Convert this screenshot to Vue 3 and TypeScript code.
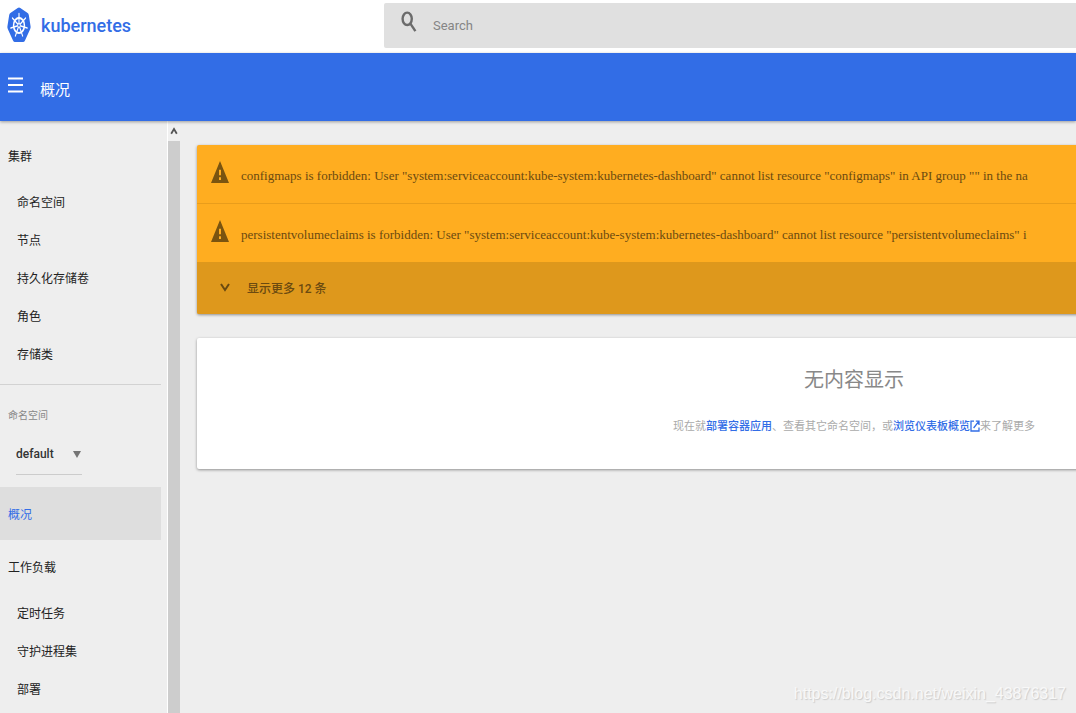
<script setup lang="ts">
import { ref } from 'vue'

interface NavGroup {
  title: string
  items: string[]
}

const cluster: NavGroup = {
  title: '集群',
  items: ['命名空间', '节点', '持久化存储卷', '角色', '存储类'],
}
const workloads: NavGroup = {
  title: '工作负载',
  items: ['定时任务', '守护进程集', '部署'],
}

const account = 'system:serviceaccount:kube-system:kubernetes-dashboard'
const warnings: string[] = [
  `configmaps is forbidden: User "${account}" cannot list resource "configmaps" in API group "" in the na`,
  `persistentvolumeclaims is forbidden: User "${account}" cannot list resource "persistentvolumeclaims" i`,
]

const query = ref('')
const namespace = ref('default')
const spokes = [0, 1, 2, 3, 4, 5, 6].map((i) => (i * 360) / 7)
</script>

<template>
  <div class="page">
    <header class="top">
      <a class="brand" href="#">
        <svg class="logo" viewBox="0 0 24 36" preserveAspectRatio="none" aria-hidden="true">
          <path
            d="M12 .6 Q12.7 .6 13.3 1 L20.6 6.1 Q21.5 6.8 21.8 8 L23.6 19.6 Q23.8 21 23.1 22.2 L18 33.4 Q17.3 35 16 35 H8 Q6.7 35 6 33.4 L.9 22.2 Q.2 21 .4 19.6 L2.2 8 Q2.5 6.8 3.4 6.1 L10.7 1 Q11.3 .6 12 .6Z"
            fill="#326de6"
          />
          <g transform="translate(12 18.4) scale(1 1.4)" stroke="#fff" fill="none">
            <circle r="5.4" stroke-width="1.5" />
            <path
              v-for="angle in spokes"
              :key="angle"
              d="M0 -1.2V-8.4"
              stroke-width="1.1"
              stroke-linecap="round"
              :transform="`rotate(${angle})`"
            />
            <circle r="1.3" fill="#326de6" stroke-width=".8" />
          </g>
        </svg>
        <span>kubernetes</span>
      </a>
      <label class="search">
        <svg viewBox="0 0 16 22" preserveAspectRatio="none" aria-hidden="true">
          <ellipse cx="6.2" cy="7.8" rx="4.6" ry="6.2" />
          <path d="M9.2 12.4 L14.4 20.2" />
        </svg>
        <input v-model="query" type="text" placeholder="Search" aria-label="Search" />
      </label>
    </header>

    <div class="bar">
      <button class="menu" type="button" aria-label="菜单">
        <svg viewBox="0 0 15 16" aria-hidden="true">
          <path d="M0 1.5H15M0 8H15M0 14.5H15" stroke="#fff" stroke-width="2" />
        </svg>
      </button>
      <h1>概况</h1>
    </div>

    <div class="body">
      <nav class="side">
        <div class="links">
          <a class="group" href="#">{{ cluster.title }}</a>
          <a v-for="item in cluster.items" :key="item" class="item" href="#">{{ item }}</a>
          <div class="namespace">
            <label for="namespace">命名空间</label>
            <div class="picker">
              <select id="namespace" v-model="namespace">
                <option value="default">default</option>
              </select>
              <svg viewBox="0 0 8 7" aria-hidden="true"><path d="M0 0H8L4 7Z" fill="#757575" /></svg>
            </div>
          </div>
          <a class="group active" href="#">概况</a>
          <a class="group" href="#">{{ workloads.title }}</a>
          <a v-for="item in workloads.items" :key="item" class="item" href="#">{{ item }}</a>
        </div>
        <div class="scroll">
          <svg viewBox="0 0 8 8" aria-hidden="true">
            <path d="M1.2 6.8 L4 2 L6.8 6.8" fill="none" stroke="#555" stroke-width="1.8" />
          </svg>
          <div class="thumb"></div>
        </div>
      </nav>

      <main class="content">
        <section class="alerts">
          <div v-for="text in warnings" :key="text" class="alert">
            <svg viewBox="0 0 18 22" preserveAspectRatio="none" aria-hidden="true">
              <path
                fill-rule="evenodd"
                d="M9 0 L18 22 H0Z M8 8.8 V14.2 H10 V8.8Z M8 16.2 V19 H10 V16.2Z"
              />
            </svg>
            <p>{{ text }}</p>
          </div>
          <button class="more" type="button">
            <svg viewBox="0 0 10 9" aria-hidden="true"><path d="M1 1 L5 7 L9 1" /></svg>
            <span>显示更多 12 条</span>
          </button>
        </section>

        <section class="empty">
          <h2>无内容显示</h2>
          <p>
            现在就<a href="#">部署容器应用</a>、查看其它命名空间，或<a href="#"
              >浏览仪表板概览<svg viewBox="0 0 10 12" preserveAspectRatio="none" aria-hidden="true">
                <path d="M4 1.2H1V11H9V7.4M5.8 1.2H9V5M9 1.2L3.6 8" /></svg></a
            >来了解更多
          </p>
        </section>
      </main>
    </div>

    <div class="watermark">https://blog.csdn.net/weixin_43876317</div>
  </div>
</template>

<style>
body {
  margin: 0;
}
</style>

<style scoped>
.page {
  position: relative;
  display: flex;
  flex-direction: column;
  height: 100vh;
  overflow: hidden;
  background: #eee;
  color: #333;
  font-family: Roboto, 'Noto Sans CJK SC', sans-serif;
  font-size: 12px;
}
a {
  color: inherit;
  text-decoration: none;
}
button,
input,
select {
  border: 0;
  padding: 0;
  background: none;
  color: inherit;
  font: inherit;
}
.top {
  display: flex;
  flex: none;
  height: 53px;
  background: #fff;
}
.brand {
  display: flex;
  flex: none;
  align-items: center;
  gap: 10px;
  box-sizing: border-box;
  width: 384px;
  padding: 0 0 3px 7px;
  color: #326de6;
  font-size: 18px;
  font-weight: 500;
}
.logo {
  width: 24px;
  height: 36px;
}
.search {
  display: flex;
  flex: 1;
  align-items: center;
  gap: 16px;
  margin: 3px 0 5px;
  padding-left: 17px;
  border-radius: 2px 0 0 2px;
  background: #e0e0e0;
}
.search svg {
  width: 16px;
  height: 22px;
  margin-bottom: 8px;
  fill: none;
  stroke: #6b6b6b;
  stroke-width: 2.4;
}
.search input {
  flex: 1;
  min-width: 0;
  outline: 0;
  font-size: 13px;
}
.search input::placeholder {
  color: #858585;
}
.bar {
  display: flex;
  flex: none;
  z-index: 1;
  align-items: center;
  gap: 17px;
  height: 68px;
  padding-left: 8px;
  background: #326de6;
  box-shadow: 0 1px 3px rgba(0, 0, 0, 0.35);
  color: #fff;
}
.menu {
  display: flex;
  margin-bottom: 4px;
}
.menu svg {
  width: 15px;
  height: 16px;
}
h1 {
  margin: 2px 0 0;
  font-size: 15px;
  font-weight: 400;
}
.body {
  display: flex;
  flex: 1;
  min-height: 0;
}
.side {
  display: flex;
  flex: none;
  overflow: hidden;
}
.links {
  width: 161px;
  padding-top: 8px;
}
.group,
.item {
  display: flex;
  align-items: center;
  height: 38px;
  padding-left: 17px;
  color: #222;
}
.group {
  height: 53px;
  padding-left: 8px;
}
.group.active {
  background: #dedede;
  color: #326de6;
}
.namespace {
  margin-top: 12px;
  padding: 21px 0 12px 8px;
  border-top: 1px solid #d2d2d2;
  line-height: 18px;
}
.namespace label {
  color: #888;
  font-size: 10px;
}
.picker {
  display: flex;
  align-items: center;
  width: 66px;
  height: 40px;
  margin: 9px 0 0 8px;
  border-bottom: 1px solid #ccc;
}
.picker select {
  flex: 1;
  min-width: 0;
  appearance: none;
  outline: 0;
  font-weight: 500;
}
.picker svg {
  width: 8px;
  height: 7px;
  margin-right: 1px;
}
.scroll {
  display: flex;
  flex-direction: column;
  align-items: center;
  width: 12px;
  margin-left: 6px;
  border-left: 1px solid #fff;
  background: #f0f0f0;
}
.scroll svg {
  flex: none;
  width: 8px;
  height: 8px;
  margin: 6px 0;
}
.thumb {
  flex: 1;
  width: 100%;
  background: #cdcdcd;
}
.content {
  flex: 1;
  min-width: 0;
  overflow: hidden;
  padding: 24px 0 0 17px;
}
.alerts,
.empty {
  min-width: 1314px;
  border-radius: 2px;
  box-shadow: 0 1px 3px rgba(0, 0, 0, 0.4);
}
.alerts {
  overflow: hidden;
  background: #ffad20;
  color: #6b4a10;
}
.alert {
  display: flex;
  align-items: center;
  gap: 12px;
  height: 58px;
  padding-left: 14px;
}
.alert + .alert {
  border-top: 1px solid #e99d1b;
}
.alert svg {
  width: 18px;
  height: 22px;
  margin-bottom: 4px;
  fill: #7a5410;
}
.alert p {
  margin: 4px 0 0;
  font-family: 'Liberation Serif', serif;
  font-size: 13px;
  white-space: nowrap;
}
.more {
  display: flex;
  align-items: center;
  gap: 17px;
  width: 100%;
  height: 52px;
  padding: 0 0 2px 23px;
  background: #de981c;
  font-weight: 500;
}
.more svg {
  width: 10px;
  height: 9px;
  fill: none;
  stroke: #6b4a10;
  stroke-width: 2;
}
.empty {
  box-sizing: border-box;
  margin-top: 24px;
  padding: 27px 0 32px;
  background: #fff;
  text-align: center;
}
h2 {
  margin: 0;
  color: #888;
  font-size: 20px;
  font-weight: 400;
  line-height: 30px;
}
.empty p {
  margin: 22px 0 0;
  color: #aaa;
  font-size: 11px;
  line-height: 20px;
}
.empty a {
  color: #326de6;
  font-weight: 500;
}
.empty a svg {
  width: 10px;
  height: 12px;
  vertical-align: -2px;
  fill: none;
  stroke: #326de6;
  stroke-width: 1.3;
}
.watermark {
  position: absolute;
  right: 10px;
  bottom: 9px;
  color: #f8f8f8;
  font-family: 'Liberation Sans', sans-serif;
  font-size: 16px;
  line-height: 20px;
  text-shadow: 1px 1px 1px #ccc;
}
</style>
